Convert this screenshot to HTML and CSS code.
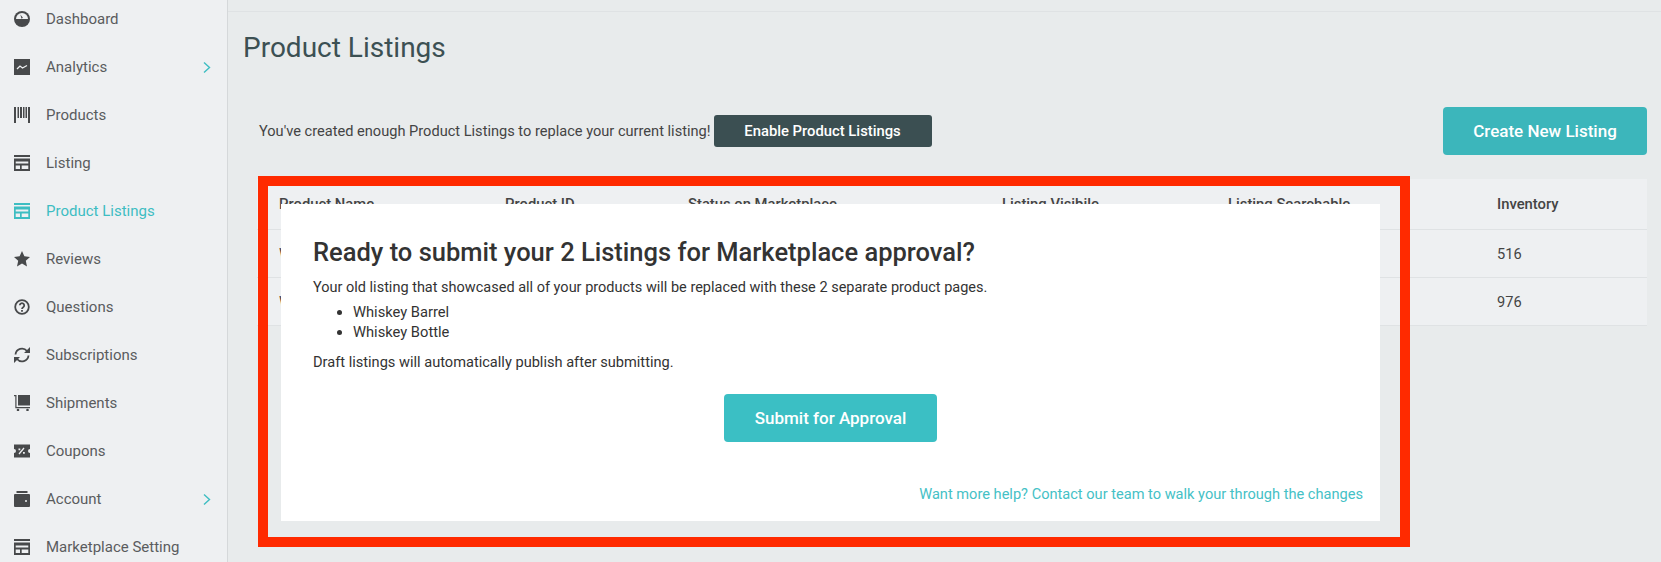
FILE: index.html
```html
<!DOCTYPE html>
<html lang="en">
<head>
    <meta charset="UTF-8">
    <meta name="viewport" content="width=device-width, initial-scale=1.0">
    <title>Product Listings</title>
    <link rel="stylesheet" href="styles.css">
</head>
<body>
    <div class="layout">
        <nav class="sidebar">
            <a class="nav-item">
                <svg class="nav-icon" viewBox="0 0 16 16"><circle cx="8" cy="8" r="8"/><path class="cut" d="M2 8a6 6 0 0 1 12 0z"/><path d="M6.3 3.6l2.6 3.2-1.4 1z"/></svg>
                <span>Dashboard</span>
            </a>
            <a class="nav-item">
                <svg class="nav-icon" viewBox="0 0 16 16"><path d="M0 0h16v16H0z"/><path class="line" d="M3 10l3-3 2.500 2L13 6.500"/></svg>
                <span>Analytics</span>
                <svg class="chevron" viewBox="0 0 8 12"><path d="M1 1l5.500 5L1 11"/></svg>
            </a>
            <a class="nav-item">
                <svg class="nav-icon" viewBox="0 0 16 16"><path d="M0 0h2v16H0zM3.500 0h1.500v11H3.500zM6 0h2v11H6zM9 0h1.500v11H9zM11.500 0h1.500v11h-1.500zM14 0h2v16h-2z"/></svg>
                <span>Products</span>
            </a>
            <a class="nav-item">
                <svg class="nav-icon" viewBox="0 0 16 16"><use href="#listing"/></svg>
                <span>Listing</span>
            </a>
            <a class="nav-item active">
                <svg class="nav-icon" viewBox="0 0 16 16"><use href="#listing"/></svg>
                <span>Product Listings</span>
            </a>
            <a class="nav-item">
                <svg class="nav-icon" viewBox="0 0 16 16"><path d="M8 0l2.400 5.300 5.600.6-4.200 3.800 1.200 5.700L8 12.500l-5 2.900 1.200-5.700L0 5.900l5.600-.6z"/></svg>
                <span>Reviews</span>
            </a>
            <a class="nav-item">
                <svg class="nav-icon" viewBox="0 0 16 16"><circle class="ring" cx="8" cy="8" r="6.800"/><path class="q" d="M5.800 6.300a2.200 2.200 0 1 1 3.400 1.900C8.400 8.700 8 9.100 8 10"/><path d="M7.100 11h1.800v1.800H7.100z"/></svg>
                <span>Questions</span>
            </a>
            <a class="nav-item">
                <svg class="nav-icon" viewBox="0 0 16 16"><path class="q" d="M1.500 7.500A6.500 6.500 0 0 1 13 4M14.500 8.500A6.500 6.500 0 0 1 3 12"/><path d="M16 0v6h-6zM0 16v-6h6z"/></svg>
                <span>Subscriptions</span>
            </a>
            <a class="nav-item">
                <svg class="nav-icon" viewBox="0 0 16 16"><path d="M0 0h2.500v12H16v1.200H1.300V1.200H0zM4 0h12v10.500H4z"/><circle cx="4" cy="15" r="1.300"/><circle cx="13.500" cy="15" r="1.300"/></svg>
                <span>Shipments</span>
            </a>
            <a class="nav-item">
                <svg class="nav-icon" viewBox="0 0 16 16"><path d="M0 1.500h16v4.500a2 2 0 0 0 0 4v4.500H0V10a2 2 0 0 0 0-4z"/><path class="line" d="M5 11l5-6"/><path class="cut" d="M4.500 5.500h1.800v1.800H4.500zM9 9h1.800v1.800H9z"/></svg>
                <span>Coupons</span>
            </a>
            <a class="nav-item">
                <svg class="nav-icon" viewBox="0 0 16 16"><path d="M2.500 0h11v2h-11z"/><path d="M1 3h14a1 1 0 0 1 1 1v11a1 1 0 0 1-1 1H1a1 1 0 0 1-1-1V4a1 1 0 0 1 1-1z"/><circle class="cut" cx="12" cy="10" r="1"/></svg>
                <span>Account</span>
                <svg class="chevron" viewBox="0 0 8 12"><path d="M1 1l5.500 5L1 11"/></svg>
            </a>
            <a class="nav-item">
                <svg class="nav-icon" viewBox="0 0 16 16"><use href="#listing"/></svg>
                <span>Marketplace Setting</span>
            </a>
        </nav>

        <main class="content">
            <div class="topbar"></div>
            <h1 class="page-title">Product Listings</h1>
            <div class="actions">
                <div class="notice">
                    <span>You've created enough Product Listings to replace your current listing!</span>
                    <button class="btn-dark">Enable Product Listings</button>
                </div>
                <button class="btn-create">Create New Listing</button>
            </div>
            <table class="listings">
                <thead>
                    <tr>
                        <th class="col-name">Product Name</th>
                        <th class="col-id">Product ID</th>
                        <th class="col-status">Status on Marketplace</th>
                        <th class="col-visible">Listing Visibile</th>
                        <th class="col-search">Listing Searchable</th>
                        <th>Inventory</th>
                    </tr>
                </thead>
                <tbody>
                    <tr><td>Whiskey Barrel</td><td></td><td></td><td></td><td></td><td>516</td></tr>
                    <tr><td>Whiskey Bottle</td><td></td><td></td><td></td><td></td><td>976</td></tr>
                </tbody>
            </table>
        </main>
    </div>

    <div class="highlight"></div>

    <section class="modal">
        <h2>Ready to submit your 2 Listings for Marketplace approval?</h2>
        <p>Your old listing that showcased all of your products will be replaced with these 2 separate product pages.</p>
        <ul>
            <li>Whiskey Barrel</li>
            <li>Whiskey Bottle</li>
        </ul>
        <p>Draft listings will automatically publish after submitting.</p>
        <div class="modal-action">
            <button class="btn-submit">Submit for Approval</button>
        </div>
        <a class="help-link">Want more help? Contact our team to walk your through the changes</a>
    </section>

    <svg class="defs" width="0" height="0">
        <symbol id="listing" viewBox="0 0 16 16">
            <path fill-rule="evenodd" d="M0 0h16v2H0zM0 3.500h16V16H0zM1.700 6.500v2h12.600v-2zM1.700 10.500v3.500h4.300v-3.500zM7.700 10.500v3.500h6.600v-3.500z"/>
        </symbol>
    </svg>
</body>
</html>
```

FILE: styles.css
```css
html, body {
    height: 562px;
    overflow: hidden;
}
body {
    margin: 0;
    position: relative;
    font-family: Roboto, Arial, sans-serif;
    font-size: 15px;
    background-color: #e8ebec;
    color: #444;
}
.layout {
    display: flex;
    height: 562px;
}

/* sidebar */
.sidebar {
    width: 227px;
    flex-shrink: 0;
    margin-top: -5px;
    background-color: #eef0f2;
    border-right: 1px solid #d5d8da;
}
.nav-item {
    display: flex;
    align-items: center;
    height: 48px;
    padding: 0 16px 0 14px;
    color: #5a5c5e;
    font-size: 15px;
}
.nav-icon {
    width: 16px;
    height: 16px;
    margin-right: 16px;
    fill: #47494b;
    flex-shrink: 0;
}
.nav-icon .cut { fill: #eef0f2; }
.nav-icon .line {
    fill: none;
    stroke: #eef0f2;
    stroke-width: 1.300;
}
.nav-icon .ring, .nav-icon .q {
    fill: none;
    stroke: #47494b;
    stroke-width: 1.800;
}
.chevron {
    width: 8px;
    height: 13px;
    margin-left: auto;
    fill: none;
    stroke: #3dbdc2;
    stroke-width: 1.400;
}
.active { color: #3dbdc2; }
.active .nav-icon { fill: #3dbdc2; }
.defs { position: absolute; }

/* main */
.content {
    flex: 1;
    min-width: 0;
    padding-right: 14px;
}
.topbar {
    height: 11px;
    margin-right: -14px;
    border-bottom: 1px solid #dfe2e4;
}
.page-title {
    margin: 20px 0 0 15px;
    font-size: 28px;
    line-height: 32px;
    font-weight: 400;
    color: #3c5053;
}
.actions {
    display: flex;
    align-items: center;
    justify-content: space-between;
    margin: 43px 0 24px 31px;
}
.notice {
    display: flex;
    align-items: center;
    gap: 3px;
    font-size: 14.6px;
    color: #444;
}
button {
    border: none;
    font-family: Roboto, Arial, sans-serif;
    color: white;
    cursor: pointer;
}
.btn-dark {
    width: 218px;
    height: 32px;
    border-radius: 3px;
    background-color: #3b4f52;
    font-size: 14.8px;
    font-weight: 500;
}
.btn-create {
    width: 204px;
    height: 48px;
    border-radius: 4px;
    background-color: #3cb6bb;
    font-size: 17px;
    font-weight: 500;
}

/* table */
.listings {
    width: 1390px;
    margin-left: 29px;
    border-collapse: collapse;
    background-color: #eef0f2;
    table-layout: fixed;
}
.listings th, .listings td {
    height: 47px;
    padding: 0 0 0 22px;
    text-align: left;
    border-bottom: 1px solid #dfe2e4;
    white-space: nowrap;
    overflow: hidden;
    font-size: 14.6px;
    color: #444;
}
.listings th {
    height: 50px;
    font-size: 14.8px;
    font-weight: 500;
}
.col-name { width: 204px; }
.col-id { width: 161px; }
.col-status { width: 292px; }
.col-visible { width: 204px; }
.col-search { width: 247px; }

/* annotation and dialog on top of the table */
.highlight {
    position: absolute;
    left: 258px;
    top: 176px;
    width: 1132px;
    height: 351px;
    border: 10px solid #ff2a00;
}
.modal {
    position: absolute;
    left: 281px;
    top: 204px;
    width: 1099px;
    height: 317px;
    box-sizing: border-box;
    padding: 32px 17px 0 32px;
    background-color: white;
    color: #333;
}
.modal h2 {
    margin: 0;
    font-size: 25.5px;
    line-height: 32px;
    font-weight: 500;
}
.modal p {
    margin: 10px 0 0;
    font-size: 14.5px;
    line-height: 20px;
}
.modal ul {
    margin: 4px 0 0;
    padding-left: 40px;
    font-size: 14.7px;
    line-height: 20px;
}
.modal ul + p {
    margin-top: 10px;
    font-size: 14.6px;
}
.modal-action {
    display: flex;
    justify-content: center;
    margin: 22px 0 0 -15px;
}
.btn-submit {
    width: 213px;
    height: 48px;
    border-radius: 4px;
    background-color: #3bbfc4;
    font-size: 17px;
    font-weight: 500;
}
.help-link {
    display: block;
    margin-top: 42px;
    text-align: right;
    font-size: 14.6px;
    line-height: 20px;
    color: #45c1c6;
}
```
